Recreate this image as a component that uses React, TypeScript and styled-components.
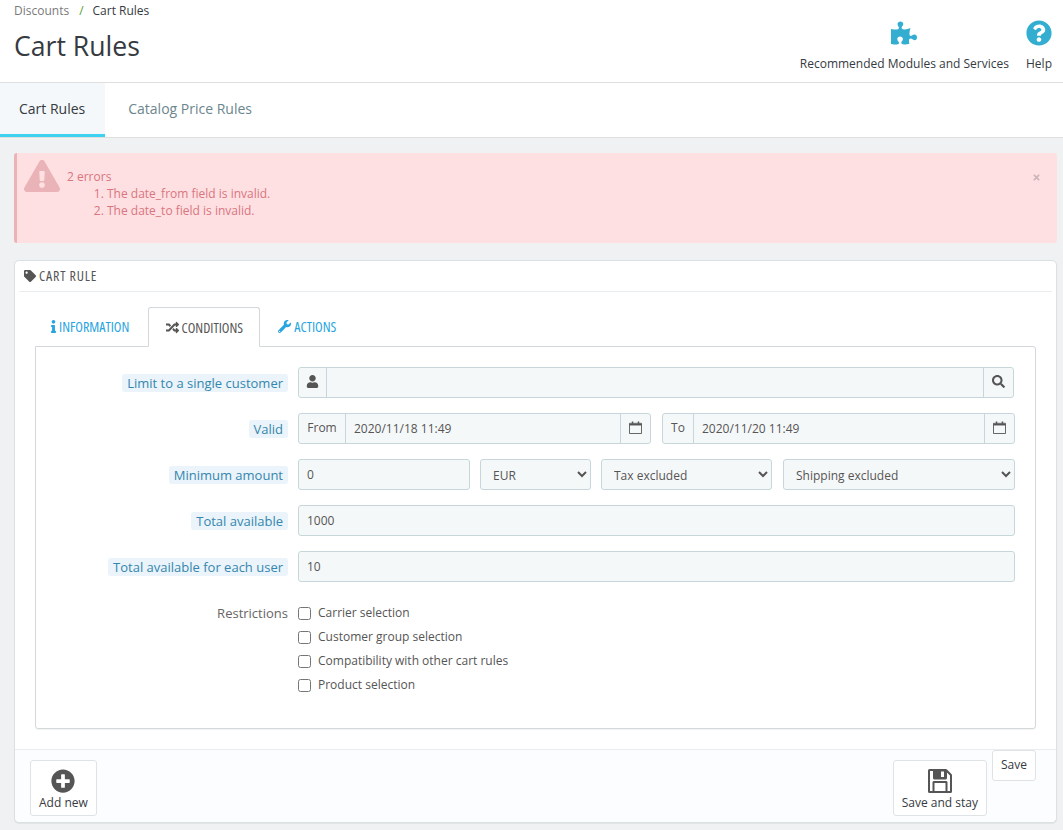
import React from 'react'
import styled, { createGlobalStyle } from 'styled-components'
import {
  FaExclamationTriangle,
  FaInfo,
  FaPlusCircle,
  FaPuzzlePiece,
  FaQuestionCircle,
  FaRandom,
  FaSearch,
  FaTag,
  FaTimes,
  FaUser,
  FaWrench
} from 'react-icons/fa'

const GlobalStyle = createGlobalStyle`
  html, body {
    margin: 0;
    padding: 0;
    height: 830px;
    overflow: hidden;
    background: #eff1f2;
    font-family: "Open Sans", "Liberation Sans", sans-serif;
    font-size: 12px;
    color: #555;
  }
  * { box-sizing: border-box; }
`

const Header = styled.header`
  display: flex;
  justify-content: space-between;
  height: 83px;
  padding: 0 11px 0 14px;
  background: #fff;
  border-bottom: 1px solid #dfdfdf;
`

const Breadcrumb = styled.div`
  display: flex;
  gap: 8px;
  height: 21px;
  line-height: 21px;
  font-size: 12px;
  color: #363a41;
`

const Crumb = styled.span`
  color: #7a7a7a;
`

const Slash = styled.span`
  margin: 0 1px 0 2px;
  color: #5e9a2c;
`

const Title = styled.h1`
  margin: 3px 0 0;
  font-size: 26.6px;
  line-height: 44px;
  font-weight: 400;
  color: #363a41;
`

const HeaderActions = styled.div`
  display: flex;
  gap: 17px;
  padding-top: 20px;
`

const HeaderAction = styled.div`
  display: flex;
  flex-direction: column;
  align-items: center;
  gap: 9px;
  color: #363a41;
  font-size: 12px;
  line-height: 17px;
  white-space: nowrap;
  svg {
    width: 26px;
    height: 26px;
    color: #33aed0;
  }
`

const TopTabs = styled.nav`
  display: flex;
  height: 55px;
  background: #fff;
  border-bottom: 1px solid #dfdfdf;
`

const TopTab = styled.div<{ $active?: boolean }>`
  height: 54px;
  padding: 0 ${({ $active }) => ($active ? '20px 0 19px' : '23px')};
  line-height: 52px;
  font-size: 14px;
  color: ${({ $active }) => ($active ? '#363a41' : '#6c868e')};
  background: ${({ $active }) => ($active ? '#f4f8fb' : '#fff')};
  border-bottom: 3px solid ${({ $active }) => ($active ? '#3ed2f0' : 'transparent')};
`

const Content = styled.main`
  padding: 15px 6px 0 14px;
`

const ErrorAlert = styled.div`
  position: relative;
  display: flex;
  height: 90px;
  padding: 15px 0 0 7px;
  background: #fee0e2;
  border-left: 3px solid #eab3b7;
  border-radius: 3px;
  color: #d9757f;
  font-size: 12px;
  line-height: 17px;
  svg.warn {
    width: 36px;
    height: 36px;
    margin: -10px 7px 0 0;
    color: #e9b3b8;
  }
`

const ErrorList = styled.ol`
  margin: 0;
  padding: 0 0 0 40px;
`

const CloseIcon = styled(FaTimes)`
  position: absolute;
  top: 20px;
  right: 16px;
  width: 9px;
  height: 9px;
  color: #cdb5ba;
`

const Panel = styled.section`
  margin-top: 17px;
  height: 563px;
  display: flex;
  flex-direction: column;
  background: #fff;
  border: 1px solid #dbe0e3;
  border-radius: 5px;
  box-shadow: 0 1px 1px rgba(0, 0, 0, 0.06);
`

const PanelHeading = styled.div`
  display: flex;
  align-items: center;
  gap: 3px;
  height: 31px;
  margin: 0 4px;
  padding: 0 5px 1px;
  border-bottom: 1px solid #eaedef;
  font-size: 14px;
  font-stretch: 75%;
  letter-spacing: 0.8px;
  font-weight: 400;
  color: #555;
  text-transform: uppercase;
  svg {
    width: 12px;
    height: 12px;
  }
`

const FormTabs = styled.div`
  display: flex;
  margin: 15px 20px 0;
  height: 40px;
`

const FormTab = styled.div<{ $active?: boolean }>`
  display: flex;
  align-items: center;
  justify-content: center;
  gap: 3px;
  width: ${({ $active }) => ($active ? '112px' : 'auto')};
  margin-right: ${({ $active }) => ($active ? '2px' : '0')};
  padding: ${({ $active }) => ($active ? '0' : '0 19px 0 16px')};
  height: ${({ $active }) => ($active ? '40px' : '39px')};
  position: relative;
  z-index: 1;
  font-size: 14px;
  font-stretch: 75%;
  font-weight: 400;
  text-transform: uppercase;
  color: ${({ $active }) => ($active ? '#555' : '#27a5e0')};
  background: #fff;
  border: ${({ $active }) => ($active ? '1px solid #d3d8db' : 'none')};
  border-bottom: ${({ $active }) => ($active ? '1px solid #fff' : 'none')};
  border-radius: 3px 3px 0 0;
  svg {
    width: 13px;
    height: 13px;
  }
`

const InfoIcon = styled(FaInfo)`
  && {
    width: 5px;
  }
`

const TabPane = styled.div`
  margin: -1px 20px 0;
  height: 383px;
  padding: 20px 20px 0 0;
  border: 1px solid #d3d8db;
  border-radius: 0 3px 3px 3px;
  box-shadow: 0 1px 1px rgba(0, 0, 0, 0.05);
`

const Row = styled.div`
  display: grid;
  grid-template-columns: 252px 1fr;
  column-gap: 10px;
  margin-bottom: 15px;
`

const LabelCell = styled.div`
  display: flex;
  justify-content: flex-end;
  align-items: flex-start;
  padding-top: 7px;
`

const HintLabel = styled.span`
  padding: 0 5px;
  line-height: 18px;
  font-size: 13px;
  color: #3586ae;
  background: #eaf4fa;
  border-radius: 3px;
  white-space: nowrap;
`

const PlainLabel = styled.span`
  font-size: 13px;
  line-height: 18px;
  color: #666;
`

const InputGroup = styled.div<{ $basis?: number; $inset?: number }>`
  display: flex;
  flex: ${({ $basis }) => ($basis ? `0 0 ${$basis}px` : '1')};
  height: 31px;
  margin-right: ${({ $inset }) => $inset ?? 0}px;
  background: #f5f8f9;
  border: 1px solid #c7d6db;
  border-radius: 3px;
  min-width: 0;
`

const Addon = styled.span<{ $width: number; $side?: 'left' | 'right' }>`
  display: flex;
  align-items: center;
  justify-content: center;
  flex: 0 0 ${({ $width }) => $width}px;
  padding-bottom: 2px;
  font-size: 12px;
  color: #555;
  border-${({ $side }) => ($side === 'right' ? 'left' : 'right')}: 1px solid #c7d6db;
  svg {
    width: 13px;
    height: 13px;
    color: #555;
  }
`

const InputText = styled.span`
  flex: 1;
  padding: 0 8px;
  line-height: 29px;
  font-size: 12px;
  color: #555;
`

const FieldRow = styled.div<{ $gap: number }>`
  display: flex;
  gap: ${({ $gap }) => $gap}px;
`

const SelectBox = styled.select<{ $width?: number; $offset?: number }>`
  flex: ${({ $width }) => ($width ? `0 0 ${$width}px` : '1')};
  height: 31px;
  margin-left: ${({ $offset }) => $offset ?? 0}px;
  padding: 2px 0 0 8px;
  background: #f5f8f9;
  border: 1px solid #c7d6db;
  border-radius: 3px;
  font-family: inherit;
  font-size: 12px;
  color: #555;
`

const CheckList = styled.div`
  display: flex;
  flex-direction: column;
  gap: 6px;
  padding-top: 7px;
`

const CheckRow = styled.label`
  display: flex;
  align-items: center;
  gap: 7px;
  height: 18px;
  font-size: 12px;
  color: #555;
  input {
    width: 13px;
    height: 13px;
    margin: 1px 0 0;
  }
  span {
    margin-top: -2px;
  }
`

const Footer = styled.footer`
  flex: 1;
  display: flex;
  justify-content: space-between;
  align-items: flex-start;
  margin-top: 20px;
  padding: 0 20px 0 15px;
  background: #fcfdfe;
  border-top: 1px solid #eaedef;
  border-radius: 0 0 5px 5px;
`

const FooterGroup = styled.div`
  display: flex;
  align-items: flex-start;
  gap: 5px;
`

const ActionButton = styled.div`
  display: flex;
  flex-direction: column;
  align-items: center;
  height: 56px;
  margin-top: 10px;
  padding: 8px 8px 0;
  background: #fff;
  border: 1px solid #dfe3e6;
  border-radius: 3px;
  font-size: 12px;
  line-height: 17px;
  color: #363a41;
  white-space: nowrap;
  svg {
    width: 24px;
    height: 24px;
    margin-bottom: 1px;
    color: #555;
  }
`

const SmallButton = styled.div`
  width: 44px;
  height: 31px;
  background: #fff;
  border: 1px solid #dfe3e6;
  border-radius: 3px;
  text-align: center;
  font-size: 12px;
  line-height: 28px;
  color: #363a41;
`

function CalendarIcon() {
  return (
    <svg viewBox="0 0 14 14" fill="none">
      <path d="M.5 2.5h13v11H.5z" stroke="currentColor" />
      <path d="M.5 3h13v1.8H.5z" fill="currentColor" />
      <path d="M3 .5h1.6v2.5H3zM9.4.5H11v2.5H9.4z" fill="currentColor" />
    </svg>
  )
}

function SaveIcon() {
  return (
    <svg viewBox="0 0 24 24">
      <path
        fill="currentColor"
        fillRule="evenodd"
        d="M0 1.5A1.5 1.5 0 0 1 1.5 0h16.2c.5 0 1 .2 1.3.5l4.4 4.4c.4.4.6.8.6 1.3v16.3a1.5 1.5 0 0 1-1.5 1.5h-21A1.5 1.5 0 0 1 0 22.5zM2 2v20h2.5v-8.5c0-.8.7-1.500 1.500-1.500h12c.8 0 1.500.7 1.500 1.500V22H22V6.500L19 3.500V9c0 .8-.7 1.500-1.500 1.500h-11C5.700 10.500 5 9.800 5 9V2zM6.500 14v8h11v-8zM13 2.500V8h3V2.500z"
      />
    </svg>
  )
}

export default function App() {
  return (
    <>
      <GlobalStyle />
      <Header>
        <div>
          <Breadcrumb>
            <Crumb>Discounts</Crumb>
            <Slash>/</Slash>
            <span>Cart Rules</span>
          </Breadcrumb>
          <Title>Cart Rules</Title>
        </div>
        <HeaderActions>
          <HeaderAction>
            <FaPuzzlePiece />
            Recommended Modules and Services
          </HeaderAction>
          <HeaderAction>
            <FaQuestionCircle />
            Help
          </HeaderAction>
        </HeaderActions>
      </Header>

      <TopTabs>
        <TopTab $active>Cart Rules</TopTab>
        <TopTab>Catalog Price Rules</TopTab>
      </TopTabs>

      <Content>
        <ErrorAlert>
          <FaExclamationTriangle className="warn" />
          <div>
            2 errors
            <ErrorList>
              <li>The date_from field is invalid.</li>
              <li>The date_to field is invalid.</li>
            </ErrorList>
          </div>
          <CloseIcon />
        </ErrorAlert>

        <Panel>
          <PanelHeading>
            <FaTag />
            Cart Rule
          </PanelHeading>

          <FormTabs>
            <FormTab>
              <InfoIcon />
              Information
            </FormTab>
            <FormTab $active>
              <FaRandom />
              Conditions
            </FormTab>
            <FormTab>
              <FaWrench />
              Actions
            </FormTab>
          </FormTabs>

          <TabPane>
            <Row>
              <LabelCell>
                <HintLabel>Limit to a single customer</HintLabel>
              </LabelCell>
              <InputGroup $inset={1}>
                <Addon $width={28}>
                  <FaUser />
                </Addon>
                <InputText />
                <Addon $width={30} $side="right">
                  <FaSearch />
                </Addon>
              </InputGroup>
            </Row>
            <Row>
              <LabelCell>
                <HintLabel>Valid</HintLabel>
              </LabelCell>
              <FieldRow $gap={11}>
                <InputGroup>
                  <Addon $width={47}>From</Addon>
                  <InputText>2020/11/18 11:49</InputText>
                  <Addon $width={30} $side="right">
                    <CalendarIcon />
                  </Addon>
                </InputGroup>
                <InputGroup>
                  <Addon $width={31}>To</Addon>
                  <InputText>2020/11/20 11:49</InputText>
                  <Addon $width={30} $side="right">
                    <CalendarIcon />
                  </Addon>
                </InputGroup>
              </FieldRow>
            </Row>
            <Row>
              <LabelCell>
                <HintLabel>Minimum amount</HintLabel>
              </LabelCell>
              <FieldRow $gap={10}>
                <InputGroup $basis={172}>
                  <InputText>0</InputText>
                </InputGroup>
                <SelectBox $width={111} defaultValue="EUR">
                  <option>EUR</option>
                </SelectBox>
                <SelectBox $width={171} defaultValue="Tax excluded">
                  <option>Tax excluded</option>
                </SelectBox>
                <SelectBox $offset={1} defaultValue="Shipping excluded">
                  <option>Shipping excluded</option>
                </SelectBox>
              </FieldRow>
            </Row>
            <Row>
              <LabelCell>
                <HintLabel>Total available</HintLabel>
              </LabelCell>
              <InputGroup>
                <InputText>1000</InputText>
              </InputGroup>
            </Row>
            <Row>
              <LabelCell>
                <HintLabel>Total available for each user</HintLabel>
              </LabelCell>
              <InputGroup>
                <InputText>10</InputText>
              </InputGroup>
            </Row>
            <Row>
              <LabelCell>
                <PlainLabel>Restrictions</PlainLabel>
              </LabelCell>
              <CheckList>
                <CheckRow>
                  <input type="checkbox" />
                  <span>Carrier selection</span>
                </CheckRow>
                <CheckRow>
                  <input type="checkbox" />
                  <span>Customer group selection</span>
                </CheckRow>
                <CheckRow>
                  <input type="checkbox" />
                  <span>Compatibility with other cart rules</span>
                </CheckRow>
                <CheckRow>
                  <input type="checkbox" />
                  <span>Product selection</span>
                </CheckRow>
              </CheckList>
            </Row>
          </TabPane>

          <Footer>
            <ActionButton>
              <FaPlusCircle />
              Add new
            </ActionButton>
            <FooterGroup>
              <ActionButton>
                <SaveIcon />
                Save and stay
              </ActionButton>
              <SmallButton>Save</SmallButton>
            </FooterGroup>
          </Footer>
        </Panel>
      </Content>
    </>
  )
}
